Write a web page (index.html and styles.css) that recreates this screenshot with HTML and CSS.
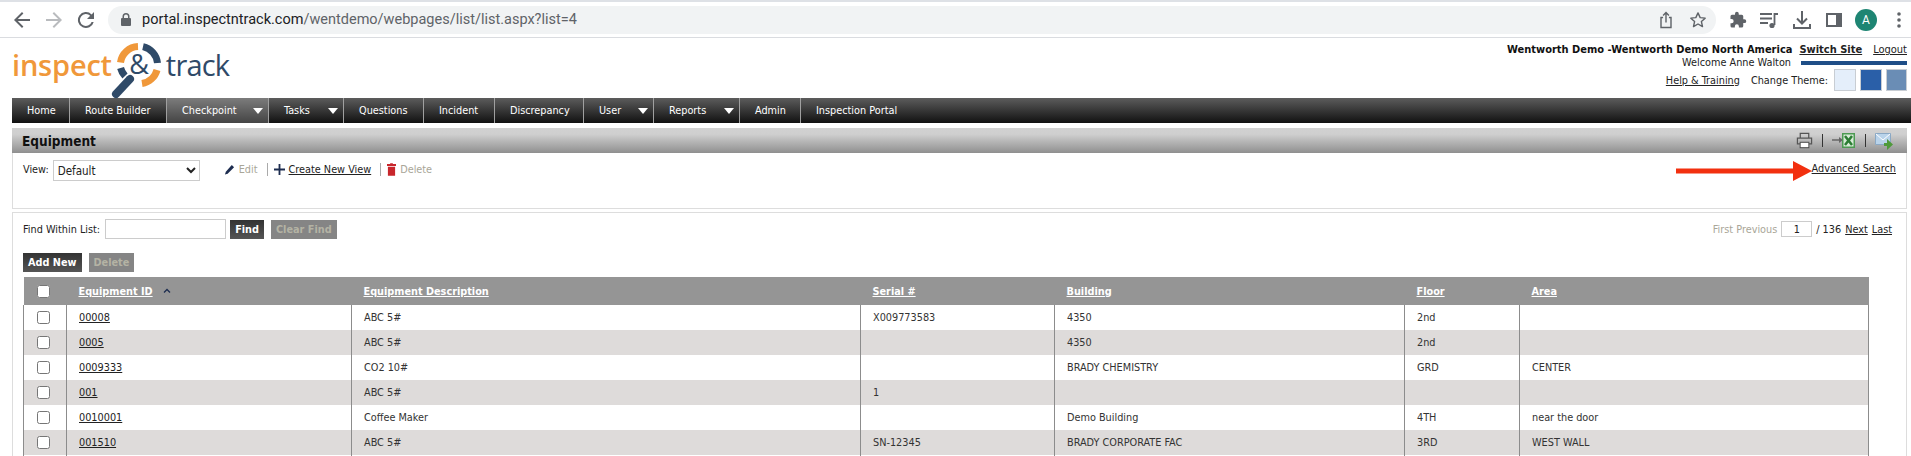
FILE: index.html
```html
<!DOCTYPE html>
<html>
<head>
<title>Equipment</title>
<link rel="stylesheet" href="styles.css">
</head>
<body>

<div class="chrome">
    <div class="chrome-nav">
        <svg class="ic" viewBox="0 0 24 24"><path fill="#5f6368" d="M20 11H7.8l5.6-5.6L12 4l-8 8 8 8 1.4-1.4L7.8 13H20z"/></svg>
        <svg class="ic" viewBox="0 0 24 24"><path fill="#b9bbbe" d="M12 4l-1.4 1.4 5.6 5.6H4v2h12.2l-5.6 5.6L12 20l8-8z"/></svg>
        <svg class="ic" viewBox="0 0 24 24"><path fill="#5f6368" d="M17.6 6.4A8 8 0 1 0 19.7 14h-2.1a6 6 0 1 1-1.4-6.2L13 11h7V4z"/></svg>
    </div>
    <div class="address">
        <svg class="lock" viewBox="0 0 12 14"><path fill="#5f6368" d="M10 5H9.500V3.500a3.500 3.500 0 0 0-7 0V5H2a1 1 0 0 0-1 1v6a1 1 0 0 0 1 1h8a1 1 0 0 0 1-1V6a1 1 0 0 0-1-1zM4 5V3.500a2 2 0 0 1 4 0V5z"/></svg>
        <span class="url">portal.inspectntrack.com<span class="url-path">/wentdemo/webpages/list/list.aspx?list=4</span></span>
        <span class="address-icons">
            <svg class="ic-sm" viewBox="0 0 24 24"><path fill="none" stroke="#5f6368" stroke-width="1.700" d="M8.500 9H6v12h12V9h-2.500M12 15V3M8.500 6.500 12 3l3.500 3.500"/></svg>
            <svg class="ic-sm" viewBox="0 0 24 24"><path fill="none" stroke="#5f6368" stroke-width="1.700" stroke-linejoin="round" d="M12 3.500l2.600 5.600 6 .7-4.500 4.100 1.300 6-5.400-3.100-5.400 3.100 1.300-6-4.500-4.100 6-.7z"/></svg>
        </span>
    </div>
    <div class="chrome-tools">
        <svg class="ic" viewBox="-4 -4 32 32"><path fill="#5f6368" d="M20.500 11H19V7a2 2 0 0 0-2-2h-4V3.500a2.500 2.500 0 0 0-5 0V5H4a2 2 0 0 0-2 2v3.800h1.500a2.700 2.700 0 0 1 0 5.400H2V20a2 2 0 0 0 2 2h3.800v-1.500a2.700 2.700 0 0 1 5.400 0V22H17a2 2 0 0 0 2-2v-4h1.500a2.500 2.500 0 0 0 0-5z"/></svg>
        <svg class="ic media" viewBox="0 0 24 24"><path fill="none" stroke="#5f6368" stroke-width="1.800" d="M3 6h12M3 10.500h12M3 15h8M17.500 5v12"/><circle cx="15" cy="17.500" r="2.600" fill="#5f6368"/><path fill="#5f6368" d="M17 5h4v2h-4z"/></svg>
        <svg class="ic" viewBox="0 0 24 24"><path fill="none" stroke="#5f6368" stroke-width="2" d="M12 3v12M7 10.500l5 5 5-5M4 16v4h16v-4"/></svg>
        <svg class="ic" viewBox="0 0 24 24"><path fill="#5f6368" d="M4 5h16v14H4zm2 2v10h8V7z"/></svg>
        <span class="avatar">A</span>
        <svg class="ic" viewBox="0 0 24 24"><circle cx="12" cy="6" r="1.800" fill="#5f6368"/><circle cx="12" cy="12" r="1.800" fill="#5f6368"/><circle cx="12" cy="18" r="1.800" fill="#5f6368"/></svg>
    </div>
</div>

<div class="header">
    <div class="logo">
        <span class="logo-inspect">inspect</span>
        <svg class="logo-mark" viewBox="0 0 56 56">
            <g fill="none" stroke-width="7">
                <path stroke="#f0983a" d="M9.500 19.500A18.500 18.500 0 0 1 27 3.600"/>
                <path stroke="#2f4a68" d="M32 3.700A18.500 18.500 0 0 1 46.500 20"/>
                <path stroke="#f0983a" d="M46 27A18.500 18.500 0 0 1 31 40.500"/>
                <path stroke="#2f4a68" d="M9.600 25A18.500 18.500 0 0 0 14 33"/>
            </g>
            <path d="M19 36 5 51" stroke="#2f4a68" stroke-width="8" stroke-linecap="round"/>
            <text class="logo-amp" x="28" y="31" text-anchor="middle">&amp;</text>
        </svg>
        <span class="logo-track">track</span>
    </div>
    <div class="site-info">
        <div class="site-row">
            <b>Wentworth Demo -Wentworth Demo North America</b>
            <a href="#" class="switch-site">Switch Site</a>
            <a href="#" class="logout">Logout</a>
        </div>
        <div class="site-row">
            <span>Welcome Anne Walton</span>
            <span class="site-bar"></span>
        </div>
        <div class="site-row theme-row">
            <a href="#">Help &amp; Training</a>
            <span class="theme-label">Change Theme:</span>
            <span class="swatch swatch-light"></span>
            <span class="swatch swatch-blue"></span>
            <span class="swatch swatch-steel"></span>
        </div>
    </div>
</div>

<div class="menu">
    <a class="menu-item m-home">Home</a>
    <a class="menu-item m-route">Route Builder</a>
    <a class="menu-item m-check active">Checkpoint<i class="caret"></i></a>
    <a class="menu-item m-tasks">Tasks<i class="caret"></i></a>
    <a class="menu-item m-quest">Questions</a>
    <a class="menu-item m-incid">Incident</a>
    <a class="menu-item m-discr">Discrepancy</a>
    <a class="menu-item m-user">User<i class="caret"></i></a>
    <a class="menu-item m-repor">Reports<i class="caret"></i></a>
    <a class="menu-item m-admin">Admin</a>
    <a class="menu-item last">Inspection Portal</a>
</div>

<div class="content">
    <div class="title-bar">
        <span class="title">Equipment</span>
        <span class="title-icons">
            <svg class="t-print" viewBox="0 0 18 18"><path fill="none" stroke="#555" stroke-width="1.300" d="M4.500 6V1.500h9V6M1.500 6.500h15v6h-15zM4.500 11h9v5.500h-9z"/><path fill="#fff" d="M5 11.500h8v4.500H5z"/></svg>
            <span class="t-sep"></span>
            <svg class="t-excel" viewBox="0 0 24 18"><path d="M0 8h8" stroke="#666" stroke-width="1.500"/><path d="M7 5l4 3-4 3z" fill="#666"/><path fill="#4c9a52" d="M10 1h13v15H10z"/><path fill="#d8ecd8" d="M11.500 2.500h10v12h-10z"/><path stroke="#2c7d34" stroke-width="2.500" d="M13 4l7 9m0-9l-7 9"/></svg>
            <span class="t-sep"></span>
            <svg class="t-mail" viewBox="0 0 18 18"><path fill="#b9d3ea" stroke="#8aa8c4" d="M.500 1.500h15v11H.500z"/><path fill="none" stroke="#fff" d="M1 2l7 6 7-6"/><path fill="#4f9a3a" d="M9 11h3V7l6 5.500L12 18v-4H9z"/></svg>
        </span>
    </div>
    <div class="view-panel">
        <label class="view-label">View:</label>
        <select class="view-select"><option>Default</option></select>
        <span class="view-actions">
            <svg class="a-edit" viewBox="0 0 12 12"><path fill="#1d2d50" d="M8.500 1 11 3.500 4 10.500 1 11.500l1-3z"/></svg>
            <span class="muted">Edit</span>
            <span class="v-sep"></span>
            <svg class="a-plus" viewBox="0 0 12 12"><path fill="#1d2d50" d="M5 0h2v5h5v2H7v5H5V7H0V5h5z"/></svg>
            <a href="#">Create New View</a>
            <span class="v-sep"></span>
            <svg class="a-trash" viewBox="0 0 10 14"><path fill="#c8262c" d="M3.500 0h3v1H10v2H0V1h3.500zM1 4h8v10H1z"/></svg>
            <span class="muted">Delete</span>
        </span>
        <a href="#" class="adv-search">Advanced Search</a>
        <svg class="red-arrow" viewBox="0 0 136 20"><path fill="#f2300f" d="M0 7.500h117V0l19 10-19 10v-7.500H0z"/></svg>
    </div>
    <div class="list-panel">
        <div class="find-row">
            <label>Find Within List:</label>
            <input class="find-input" type="text">
            <button class="btn">Find</button>
            <button class="btn off">Clear Find</button>
            <span class="pager">
                <span class="muted">First Previous</span>
                <input class="page-input" type="text" value="1">
                <span>/ 136</span>
                <a href="#">Next</a>
                <a href="#">Last</a>
            </span>
        </div>
        <div class="add-row">
            <button class="btn">Add New</button>
            <button class="btn off">Delete</button>
        </div>
        <table class="grid">
            <colgroup>
                <col class="c-check"><col class="c-id"><col class="c-desc"><col class="c-serial"><col class="c-build"><col class="c-floor"><col>
            </colgroup>
            <thead>
                <tr>
                    <th class="check"><input type="checkbox"></th>
                    <th><a href="#">Equipment ID</a><svg class="sort" viewBox="0 0 8 5"><path fill="none" stroke="#1d2d50" stroke-width="1.300" d="M1 4.500 4 1.500l3 3"/></svg></th>
                    <th><a href="#">Equipment Description</a></th>
                    <th><a href="#">Serial #</a></th>
                    <th><a href="#">Building</a></th>
                    <th><a href="#">Floor</a></th>
                    <th><a href="#">Area</a></th>
                </tr>
            </thead>
            <tbody>
                <tr><td class="check"><input type="checkbox"></td><td><a href="#">00008</a></td><td>ABC 5#</td><td>X009773583</td><td>4350</td><td>2nd</td><td></td></tr>
                <tr><td class="check"><input type="checkbox"></td><td><a href="#">0005</a></td><td>ABC 5#</td><td></td><td>4350</td><td>2nd</td><td></td></tr>
                <tr><td class="check"><input type="checkbox"></td><td><a href="#">0009333</a></td><td>CO2 10#</td><td></td><td>BRADY CHEMISTRY</td><td>GRD</td><td>CENTER</td></tr>
                <tr><td class="check"><input type="checkbox"></td><td><a href="#">001</a></td><td>ABC 5#</td><td>1</td><td></td><td></td><td></td></tr>
                <tr><td class="check"><input type="checkbox"></td><td><a href="#">0010001</a></td><td>Coffee Maker</td><td></td><td>Demo Building</td><td>4TH</td><td>near the door</td></tr>
                <tr><td class="check"><input type="checkbox"></td><td><a href="#">001510</a></td><td>ABC 5#</td><td>SN-12345</td><td>BRADY CORPORATE FAC</td><td>3RD</td><td>WEST WALL</td></tr>
            </tbody>
        </table>
        <div class="grid-tail"></div>
    </div>
</div>

</body>
</html>
```

FILE: styles.css
```css
html, body {
    height: 456px;
    overflow: hidden;
}

body {
    margin: 0;
    background: #fff;
    color: #222;
    font-family: "DejaVu Sans Condensed", "DejaVu Sans", sans-serif;
    font-stretch: condensed;
    font-size: 10.800px;
}

a {
    color: #222;
    text-decoration: underline;
}

/* browser bar */
.chrome {
    display: flex;
    align-items: center;
    height: 35px;
    border-top: 2px solid #dee1e6;
    border-bottom: 1px solid #dadce0;
}

.chrome-nav {
    display: flex;
    align-items: center;
    gap: 8px;
    width: 108px;
    padding-left: 10px;
    box-sizing: border-box;
}

.ic {
    width: 24px;
    height: 24px;
    flex: none;
}

.ic-sm {
    width: 20px;
    height: 20px;
}

.media {
    margin-left: -1px;
    margin-right: 1px;
}

.address {
    display: flex;
    align-items: center;
    width: 1608px;
    height: 28px;
    background: #f1f3f4;
    border-radius: 14px;
    padding-left: 12px;
    box-sizing: border-box;
}

.lock {
    width: 12px;
    height: 14px;
    margin-right: 10px;
}

.url {
    font-family: Roboto, sans-serif;
    font-stretch: normal;
    font-size: 14.500px;
    color: #202124;
}

.url-path {
    color: #5f6368;
}

.address-icons {
    display: flex;
    gap: 12px;
    margin-left: auto;
    padding-right: 8px;
}

.chrome-tools {
    display: flex;
    align-items: center;
    gap: 8px;
    padding-left: 10px;
}

.avatar {
    width: 22px;
    height: 22px;
    border-radius: 50%;
    background: #1e8573;
    color: #fff;
    font-family: Roboto, sans-serif;
    font-stretch: normal;
    font-size: 12px;
    line-height: 22px;
    text-align: center;
    flex: none;
    margin: 0 2px 0 1px;
}

/* page header */
.header {
    display: flex;
    justify-content: space-between;
    height: 60px;
}

.logo {
    display: flex;
    align-items: flex-start;
    margin-left: 12px;
    padding-top: 5px;
    font-family: "Open Sans", sans-serif;
    font-stretch: normal;
    font-size: 29px;
    letter-spacing: -0.200px;
    line-height: 44px;
}

.logo-inspect {
    color: #f0983a;
    font-weight: 600;
}

.logo-track {
    color: #2f4a68;
    letter-spacing: -0.800px;
}

.logo-mark {
    width: 56px;
    height: 56px;
    margin: 0 -1px 0 -1px;
    flex: none;
}

.logo-amp {
    font-size: 27px;
    fill: #2f4a68;
}

.site-info {
    display: flex;
    flex-direction: column;
    align-items: flex-end;
    padding: 5px 4px 0 0;
}

.site-row {
    display: flex;
    align-items: center;
    height: 13px;
}

.site-row b,
.site-row .switch-site,
.site-row .logout {
    font-size: 11px;
}

.site-row b {
    color: #111;
}

.switch-site {
    font-weight: bold;
    margin-left: 7px;
}

.logout {
    margin-left: 11px;
}

.site-bar {
    width: 106px;
    height: 4px;
    background: #1f4e87;
    margin-left: 10px;
}

.theme-row {
    height: 22px;
}

.theme-label {
    margin: 0 6px 0 11px;
}

.swatch {
    width: 22px;
    height: 22px;
    box-sizing: border-box;
    border: 1px solid #c8cdd3;
    margin-left: 4px;
}

.swatch-light { background: #e4eefa; margin-left: 0; }
.swatch-blue { background: #2a5fa8; }
.swatch-steel { background: #6a8db5; width: 21px; }

/* menu */
.menu {
    display: flex;
    height: 25px;
    margin-left: 12px;
    background: linear-gradient(#5c5c5c, #111);
}

.menu-item {
    position: relative;
    display: block;
    box-sizing: border-box;
    padding-left: 15px;
    color: #fff;
    text-decoration: none;
    line-height: 25px;
    border-right: 1px solid #a0a0a0;
}

.menu-item.active {
    background: linear-gradient(#7c7c7c, #444);
}

.menu-item.last {
    border-right: none;
}

.m-home { width: 58px; }
.m-route { width: 97px; }
.m-check { width: 102px; }
.m-tasks { width: 75px; }
.m-quest { width: 80px; }
.m-incid { width: 71px; }
.m-discr { width: 89px; }
.m-user { width: 70px; }
.m-repor { width: 86px; }
.m-admin { width: 61px; }

.caret {
    position: absolute;
    right: 5px;
    top: 10px;
    border-left: 5.500px solid transparent;
    border-right: 5.500px solid transparent;
    border-top: 6px solid #fff;
}

/* main area */
.content {
    margin: 5px 4px 0 12px;
}

.title-bar {
    display: flex;
    align-items: center;
    justify-content: space-between;
    height: 25px;
    padding: 0 14px 0 10px;
    background: linear-gradient(#d2d2d2, #cfcfcf 25%, #8f8f8f);
    box-sizing: border-box;
}

.title {
    font-size: 13.500px;
    font-weight: bold;
    color: #111;
}

.title-icons {
    display: flex;
    align-items: center;
    gap: 9px;
}

.t-print { width: 17px; height: 17px; }
.t-excel { width: 24px; height: 18px; }
.t-mail { width: 18px; height: 18px; }

.t-sep {
    width: 1px;
    height: 13px;
    background: #333;
}

.view-panel {
    position: relative;
    display: flex;
    align-items: flex-start;
    height: 56px;
    padding: 7px 10px 0 10px;
    border: 1px solid #ddd;
    border-top: none;
    box-sizing: border-box;
}

.view-label {
    margin: 3px 4px 0 0;
}

.view-select {
    width: 147px;
    height: 21px;
    background: #fff;
    border: 1px solid #ccc;
    font: inherit;
    font-size: 11.500px;
    color: #222;
    padding-left: 0;
}

.view-actions {
    display: flex;
    align-items: center;
    margin: 2px 0 0 24px;
    height: 14px;
}

.view-actions svg {
    flex: none;
}

.a-edit { width: 11px; height: 11px; margin-right: 4px; }
.a-plus { width: 11px; height: 11px; margin-right: 4px; }
.a-trash { width: 9px; height: 13px; margin-right: 4px; }

.v-sep {
    width: 1px;
    height: 13px;
    background: #aaa;
    margin: 0 6px 0 9px;
}

.muted {
    color: #a9a698;
}

.adv-search {
    margin: 2px 0 0 auto;
}

/* the red arrow is drawn over the panel */
.red-arrow {
    position: absolute;
    right: 94px;
    top: 8px;
    width: 136px;
    height: 20px;
}

.list-panel {
    margin-top: 3px;
    padding: 6px 10px 0 10px;
    border: 1px solid #ddd;
    border-bottom: none;
    height: 244px;
    box-sizing: border-box;
    overflow: hidden;
}

.find-row {
    display: flex;
    align-items: center;
    height: 20px;
}

.find-input {
    width: 121px;
    height: 20px;
    box-sizing: border-box;
    border: 1px solid #ccc;
    margin: 0 4px 0 5px;
    padding: 0;
}

.btn {
    height: 19px;
    padding: 0 5px;
    border: none;
    background: linear-gradient(#333, #555);
    color: #fff;
    font: inherit;
    font-weight: bold;
    margin-right: 7px;
}

.btn.off {
    background: #858585;
    color: #b4b3a4;
}

.pager {
    display: flex;
    align-items: center;
    gap: 4px;
    margin-left: auto;
    padding-right: 4px;
}

.page-input {
    width: 31px;
    height: 16px;
    box-sizing: border-box;
    border: 1px solid #ccc;
    padding: 0;
    font: inherit;
    text-align: center;
    color: #222;
}

.add-row {
    display: flex;
    margin-top: 14px;
}

.grid {
    margin-top: 5px;
    width: 1846px;
    border-collapse: collapse;
    table-layout: fixed;
}

.c-check { width: 43px; }
.c-id { width: 285px; }
.c-desc { width: 509px; }
.c-serial { width: 194px; }
.c-build { width: 350px; }
.c-floor { width: 115px; }

.grid th {
    height: 28px;
    padding: 0 0 0 12px;
    background: #959595;
    text-align: left;
    font-weight: bold;
    border: none;
}

.grid th a {
    color: #fff;
}

.grid td {
    height: 25px;
    padding: 0 0 0 12px;
    box-sizing: border-box;
    border-left: 1px solid #8c8c8c;
    color: #333;
}

.grid td:last-child {
    border-right: 1px solid #8c8c8c;
}

.grid tbody tr:nth-child(even) td {
    background: #dedbda;
}

.grid .check {
    padding: 0 4px 0 0;
    text-align: center;
}

.grid input {
    width: 13px;
    height: 13px;
    margin: 0;
    vertical-align: middle;
}

.sort {
    width: 8px;
    height: 5px;
    margin-left: 10px;
    vertical-align: 2px;
}

/* the row cut off by the window: only its column lines show */
.grid-tail {
    width: 1846px;
    height: 4px;
    box-sizing: border-box;
    border-left: 1px solid #8c8c8c;
    border-right: 1px solid #8c8c8c;
    background-image:
        linear-gradient(#8c8c8c, #8c8c8c),
        linear-gradient(#8c8c8c, #8c8c8c),
        linear-gradient(#8c8c8c, #8c8c8c),
        linear-gradient(#8c8c8c, #8c8c8c),
        linear-gradient(#8c8c8c, #8c8c8c),
        linear-gradient(#8c8c8c, #8c8c8c);
    background-size: 1px 100%;
    background-repeat: no-repeat;
    background-position: 42px 0, 327px 0, 836px 0, 1030px 0, 1380px 0, 1495px 0;
}
```
